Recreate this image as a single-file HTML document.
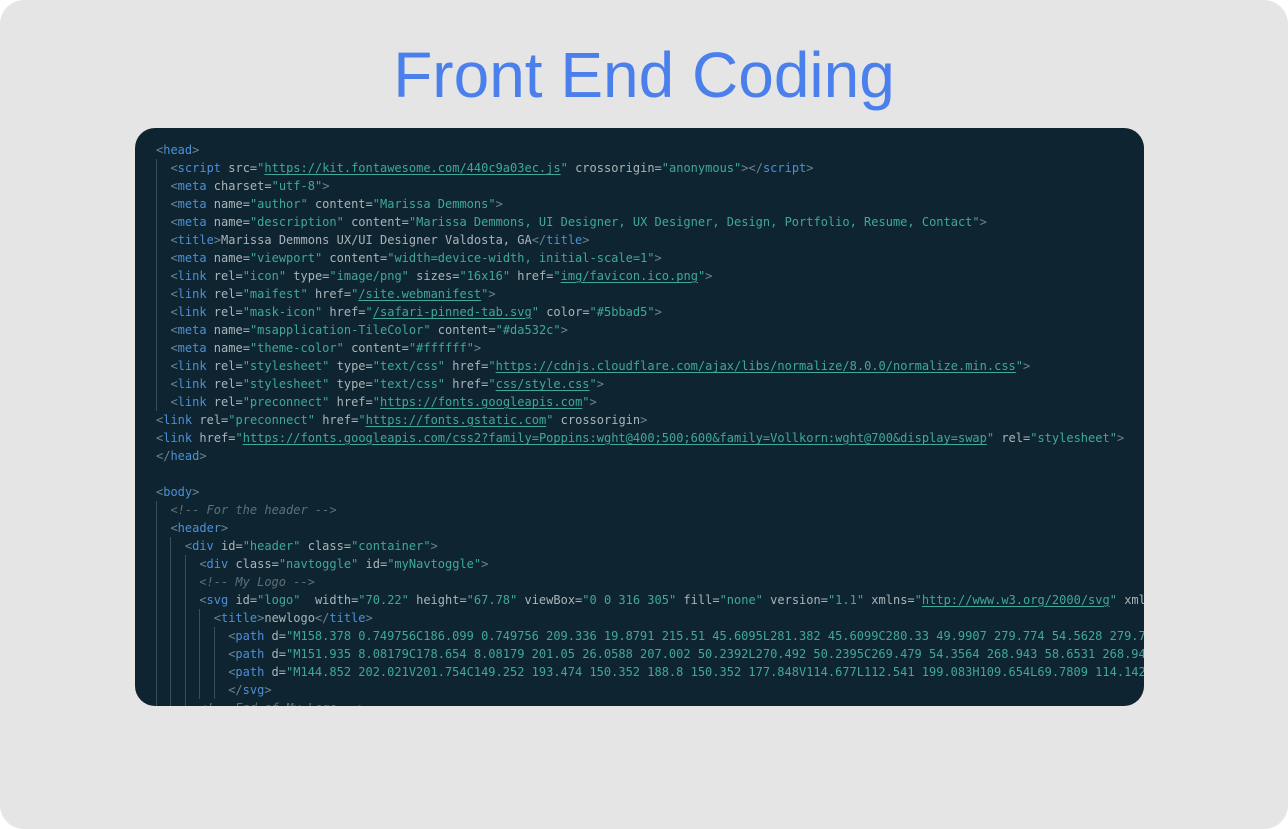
<!DOCTYPE html>
<html><head><meta charset="utf-8"><style>
html,body{margin:0;padding:0;background:#fff;}
.outer{position:absolute;left:0;top:0;width:1288px;height:829px;background:#e5e5e5;border-radius:24px;overflow:hidden;}
h1{position:absolute;left:0;right:0;top:37px;margin:0;text-align:center;font:normal 64px/76px "Liberation Sans",sans-serif;color:#4a7fec;}
.card{position:absolute;left:135px;top:128px;width:1009px;height:578px;background:#0e2531;border-radius:20px;overflow:hidden;}
.code{position:absolute;left:21px;top:13px;font:12px/18px "DejaVu Sans Mono","Liberation Mono",monospace;color:#aab4b8;white-space:normal;}
.l{height:18px;white-space:pre;}
.i{display:inline-block;width:14.44px;height:18px;vertical-align:top;box-sizing:border-box;border-left:1px solid #34505b;}
.p{color:#6e8590}.t{color:#4d8fd6}.s{color:#3fa79b}.u{text-decoration:underline;text-underline-offset:2px}.c{color:#5d7078;font-style:italic}
</style></head><body><div class="outer">
<h1>Front End Coding</h1>
<div class="card"><div class="code"><div class="l"><span class="p">&lt;</span><span class="t">head</span><span class="p">&gt;</span></div><div class="l"><span class="i"></span><span class="p">&lt;</span><span class="t">script</span> src=<span class="s">"<span class="u">https://kit.fontawesome.com/440c9a03ec.js</span>"</span> crossorigin=<span class="s">"anonymous"</span><span class="p">&gt;&lt;/</span><span class="t">script</span><span class="p">&gt;</span></div><div class="l"><span class="i"></span><span class="p">&lt;</span><span class="t">meta</span> charset=<span class="s">"utf-8"</span><span class="p">&gt;</span></div><div class="l"><span class="i"></span><span class="p">&lt;</span><span class="t">meta</span> name=<span class="s">"author"</span> content=<span class="s">"Marissa Demmons"</span><span class="p">&gt;</span></div><div class="l"><span class="i"></span><span class="p">&lt;</span><span class="t">meta</span> name=<span class="s">"description"</span> content=<span class="s">"Marissa Demmons, UI Designer, UX Designer, Design, Portfolio, Resume, Contact"</span><span class="p">&gt;</span></div><div class="l"><span class="i"></span><span class="p">&lt;</span><span class="t">title</span><span class="p">&gt;</span>Marissa Demmons UX/UI Designer Valdosta, GA<span class="p">&lt;/</span><span class="t">title</span><span class="p">&gt;</span></div><div class="l"><span class="i"></span><span class="p">&lt;</span><span class="t">meta</span> name=<span class="s">"viewport"</span> content=<span class="s">"width=device-width, initial-scale=1"</span><span class="p">&gt;</span></div><div class="l"><span class="i"></span><span class="p">&lt;</span><span class="t">link</span> rel=<span class="s">"icon"</span> type=<span class="s">"image/png"</span> sizes=<span class="s">"16x16"</span> href=<span class="s">"<span class="u">img/favicon.ico.png</span>"</span><span class="p">&gt;</span></div><div class="l"><span class="i"></span><span class="p">&lt;</span><span class="t">link</span> rel=<span class="s">"maifest"</span> href=<span class="s">"<span class="u">/site.webmanifest</span>"</span><span class="p">&gt;</span></div><div class="l"><span class="i"></span><span class="p">&lt;</span><span class="t">link</span> rel=<span class="s">"mask-icon"</span> href=<span class="s">"<span class="u">/safari-pinned-tab.svg</span>"</span> color=<span class="s">"#5bbad5"</span><span class="p">&gt;</span></div><div class="l"><span class="i"></span><span class="p">&lt;</span><span class="t">meta</span> name=<span class="s">"msapplication-TileColor"</span> content=<span class="s">"#da532c"</span><span class="p">&gt;</span></div><div class="l"><span class="i"></span><span class="p">&lt;</span><span class="t">meta</span> name=<span class="s">"theme-color"</span> content=<span class="s">"#ffffff"</span><span class="p">&gt;</span></div><div class="l"><span class="i"></span><span class="p">&lt;</span><span class="t">link</span> rel=<span class="s">"stylesheet"</span> type=<span class="s">"text/css"</span> href=<span class="s">"<span class="u">https://cdnjs.cloudflare.com/ajax/libs/normalize/8.0.0/normalize.min.css</span>"</span><span class="p">&gt;</span></div><div class="l"><span class="i"></span><span class="p">&lt;</span><span class="t">link</span> rel=<span class="s">"stylesheet"</span> type=<span class="s">"text/css"</span> href=<span class="s">"<span class="u">css/style.css</span>"</span><span class="p">&gt;</span></div><div class="l"><span class="i"></span><span class="p">&lt;</span><span class="t">link</span> rel=<span class="s">"preconnect"</span> href=<span class="s">"<span class="u">https://fonts.googleapis.com</span>"</span><span class="p">&gt;</span></div><div class="l"><span class="p">&lt;</span><span class="t">link</span> rel=<span class="s">"preconnect"</span> href=<span class="s">"<span class="u">https://fonts.gstatic.com</span>"</span> crossorigin<span class="p">&gt;</span></div><div class="l"><span class="p">&lt;</span><span class="t">link</span> href=<span class="s">"<span class="u">https://fonts.googleapis.com/css2?family=Poppins:wght@400;500;600&amp;family=Vollkorn:wght@700&amp;display=swap</span>"</span> rel=<span class="s">"stylesheet"</span><span class="p">&gt;</span></div><div class="l"><span class="p">&lt;/</span><span class="t">head</span><span class="p">&gt;</span></div><div class="l"></div><div class="l"><span class="p">&lt;</span><span class="t">body</span><span class="p">&gt;</span></div><div class="l"><span class="i"></span><span class="c">&lt;!-- For the header --&gt;</span></div><div class="l"><span class="i"></span><span class="p">&lt;</span><span class="t">header</span><span class="p">&gt;</span></div><div class="l"><span class="i"></span><span class="i"></span><span class="p">&lt;</span><span class="t">div</span> id=<span class="s">"header"</span> class=<span class="s">"container"</span><span class="p">&gt;</span></div><div class="l"><span class="i"></span><span class="i"></span><span class="i"></span><span class="p">&lt;</span><span class="t">div</span> class=<span class="s">"navtoggle"</span> id=<span class="s">"myNavtoggle"</span><span class="p">&gt;</span></div><div class="l"><span class="i"></span><span class="i"></span><span class="i"></span><span class="c">&lt;!-- My Logo --&gt;</span></div><div class="l"><span class="i"></span><span class="i"></span><span class="i"></span><span class="p">&lt;</span><span class="t">svg</span> id=<span class="s">"logo"</span>  width=<span class="s">"70.22"</span> height=<span class="s">"67.78"</span> viewBox=<span class="s">"0 0 316 305"</span> fill=<span class="s">"none"</span> version=<span class="s">"1.1"</span> xmlns=<span class="s">"<span class="u">http://www.w3.org/2000/svg</span>"</span> xmlns:xlink</div><div class="l"><span class="i"></span><span class="i"></span><span class="i"></span><span class="i"></span><span class="p">&lt;</span><span class="t">title</span><span class="p">&gt;</span>newlogo<span class="p">&lt;/</span><span class="t">title</span><span class="p">&gt;</span></div><div class="l"><span class="i"></span><span class="i"></span><span class="i"></span><span class="i"></span><span class="i"></span><span class="p">&lt;</span><span class="t">path</span> d=<span class="s">"M158.378 0.749756C186.099 0.749756 209.336 19.8791 215.51 45.6095L281.382 45.6099C280.33 49.9907 279.774 54.5628 279.774</span></div><div class="l"><span class="i"></span><span class="i"></span><span class="i"></span><span class="i"></span><span class="i"></span><span class="p">&lt;</span><span class="t">path</span> d=<span class="s">"M151.935 8.08179C178.654 8.08179 201.05 26.0588 207.002 50.2392L270.492 50.2395C269.479 54.3564 268.943 58.6531 268.943</span></div><div class="l"><span class="i"></span><span class="i"></span><span class="i"></span><span class="i"></span><span class="i"></span><span class="p">&lt;</span><span class="t">path</span> d=<span class="s">"M144.852 202.021V201.754C149.252 193.474 150.352 188.8 150.352 177.848V114.677L112.541 199.083H109.654L69.7809 114.142 114.1</span></div><div class="l"><span class="i"></span><span class="i"></span><span class="i"></span><span class="i"></span><span class="i"></span><span class="p">&lt;/</span><span class="t">svg</span><span class="p">&gt;</span></div><div class="l"><span class="i"></span><span class="i"></span><span class="i"></span><span class="c">&lt;!-- End of My Logo --&gt;</span></div></div></div>
</div></body></html>
